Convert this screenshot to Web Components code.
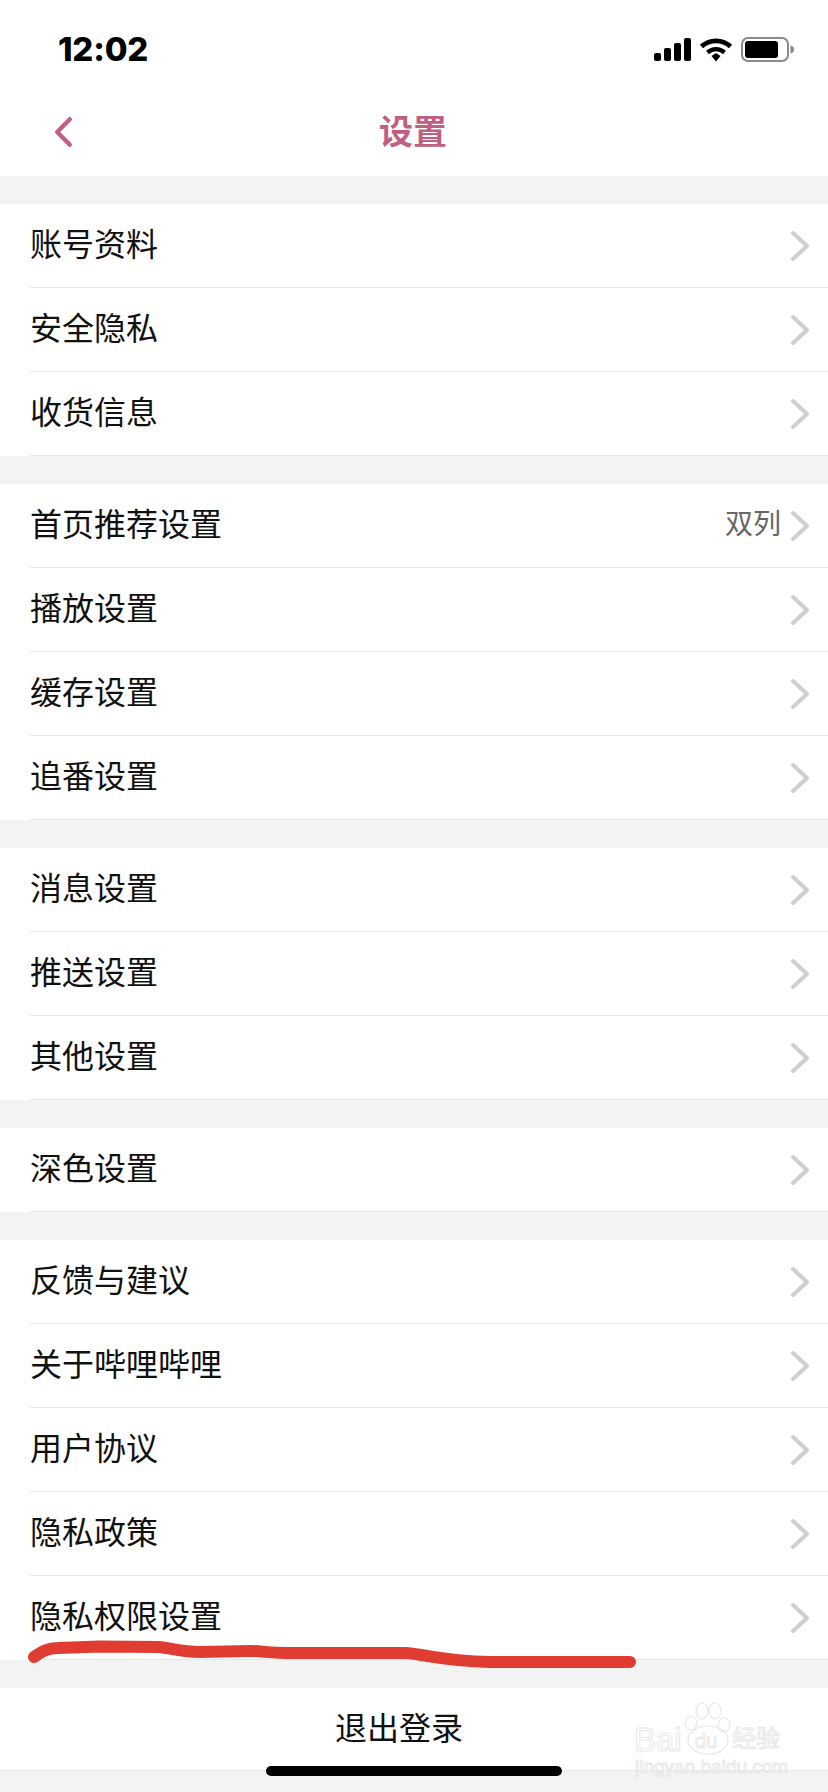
<!DOCTYPE html>
<html lang="zh">
<head>
<meta charset="utf-8">
<title>设置</title>
<style>
html,body{margin:0;padding:0;background:#f3f3f3}
body{width:828px;height:1792px;overflow:hidden;position:relative;font-family:"Noto Sans CJK SC","Liberation Sans",sans-serif}
</style>
</head>
<body>
<template id="status-tpl">
    <style>
        :host{display:flex;justify-content:space-between;align-items:center;height:88px;padding:11px 34px 0 58px;background:#fff;box-sizing:border-box}
        .time{font:800 33px/1 Inter,"Liberation Sans",sans-serif;color:#000;letter-spacing:-.2px}
        .icons{display:flex;align-items:center;gap:9px}
        svg{display:block}
    </style>
    <span class="time">12:02</span>
    <div class="icons">
        <svg width="37" height="23" viewBox="0 0 37 23" fill="#000">
            <rect x="0" y="15" width="7" height="8" rx="2"/>
            <rect x="10" y="10" width="7" height="13" rx="2"/>
            <rect x="20" y="5" width="7" height="18" rx="2"/>
            <rect x="30" y="0" width="7" height="23" rx="2"/>
        </svg>
        <svg width="32" height="24" viewBox="0 0 32 24" fill="none" stroke="#000">
            <path d="M1.500 8.500C10 1 22 1 30.500 8.500" stroke-width="4.800"/>
            <path d="M7.500 14.500C12.500 10 19.500 10 24.500 14.500" stroke-width="4.400"/>
            <path d="M11.500 18L16 15 20.500 18 16 23.500Z" fill="#000" stroke="none"/>
        </svg>
        <svg width="53" height="25" viewBox="0 0 53 25">
            <rect x="1" y="1" width="46" height="23" rx="6" fill="none" stroke="#8a8a8a" stroke-width="2"/>
            <rect x="4" y="4" width="33" height="17" rx="3" fill="#000"/>
            <path d="M49.500 8.500C52 9 53 10.500 53 12.500S52 16 49.500 16.500Z" fill="#8a8a8a"/>
        </svg>
    </div>
</template>

<template id="nav-tpl">
    <style>
        :host{display:flex;align-items:center;justify-content:center;position:relative;height:88px;background:#fff}
        .title{font-size:34px;font-weight:700;color:#c15f82;line-height:1;margin:0 2px 4px 0}
        svg{position:absolute;left:52px;top:27px}
    </style>
    <svg width="22" height="34" viewBox="0 0 22 34" fill="none" stroke="#c15f82" stroke-width="4.400" stroke-linecap="round" stroke-linejoin="round"><path d="M17.800 4.200L5.200 17 17.800 29.800"/></svg>
    <span class="title"><slot></slot></span>
</template>

<template id="group-tpl">
    <style>
        :host{display:block;margin-top:28px;background:#fff}
    </style>
    <slot></slot>
</template>

<template id="row-tpl">
    <style>
        :host{display:block;background:#fff}
        .row{display:flex;align-items:center;height:83px;margin-left:30px;padding-right:18px;border-bottom:1px solid #e6e6e6}
        .label{flex:1;font-size:32px;line-height:1;color:#111;margin-bottom:7px}
        .value{font-size:28px;line-height:1;color:#666;margin:0 9px 7px 0}
        svg{display:block}
    </style>
    <div class="row">
        <span class="label"><slot></slot></span>
        <span class="value"><slot name="value"></slot></span>
        <svg width="20" height="32" viewBox="0 0 20 32" fill="none" stroke="#cfcfcf" stroke-width="4" stroke-linecap="round" stroke-linejoin="round"><path d="M3 3L17 16 3 29"/></svg>
    </div>
</template>

<template id="logout-tpl">
    <style>
        :host{display:flex;align-items:center;justify-content:center;height:83px;margin-top:28px;padding:0 30px 7px 0;box-sizing:border-box;background:#fff;border-bottom:1px solid #e6e6e6;font-size:32px;line-height:1;color:#111}
    </style>
    <slot></slot>
</template>

<template id="overlay-tpl">
    <style>
        :host{position:absolute;inset:0;display:block;pointer-events:none}
        .stroke{position:absolute;left:0;top:0}
        .home{position:absolute;left:266px;top:1766px;width:296px;height:10px;border-radius:5px;background:#000}
        .mark{position:absolute;left:620px;top:1690px;width:208px;height:102px;font-family:"Liberation Sans",sans-serif;color:transparent;-webkit-text-stroke:1px #e8e8e8}
        .mark b{position:absolute;left:14px;top:33px;font-size:33px;line-height:1;font-weight:400}
        .mark u{position:absolute;left:75px;top:41px;font-size:20px;line-height:1;text-decoration:none}
        .mark i{position:absolute;left:112px;top:35px;font:400 24px/1 "Noto Sans CJK SC",sans-serif}
        .mark span{position:absolute;left:15px;top:67px;font-size:19px;line-height:1}
        .mark svg{position:absolute;left:60px;top:10px}
    </style>
    <svg class="stroke" width="828" height="1792" viewBox="0 0 828 1792" fill="none">
        <path d="M34 1657C40 1653 46 1648 58 1648L100 1646.500 158 1647C172 1648 180 1652 200 1652L250 1651C262 1651 268 1653 285 1653L405 1653C425 1654 440 1661 490 1662L630 1662" stroke="#e03c31" stroke-width="12" stroke-linecap="round" stroke-linejoin="round"/>
    </svg>
    <div class="mark">
        <svg width="56" height="56" viewBox="0 0 56 56" fill="none" stroke="#e8e8e8" stroke-width="1.200">
            <ellipse cx="28" cy="40" rx="20" ry="14"/>
            <ellipse cx="11" cy="23" rx="6" ry="7"/><ellipse cx="22" cy="11" rx="6" ry="8"/><ellipse cx="35" cy="11" rx="6" ry="8"/><ellipse cx="44" cy="25" rx="6" ry="7"/>
        </svg>
        <b>Bai</b><u>du</u><i>经验</i><span>jingyan.baidu.com</span>
    </div>
    <div class="home"></div>
</template>

<status-bar></status-bar>
<nav-bar>设置</nav-bar>
<setting-group>
    <setting-row>账号资料</setting-row>
    <setting-row>安全隐私</setting-row>
    <setting-row>收货信息</setting-row>
</setting-group>
<setting-group>
    <setting-row>首页推荐设置<span slot="value">双列</span></setting-row>
    <setting-row>播放设置</setting-row>
    <setting-row>缓存设置</setting-row>
    <setting-row>追番设置</setting-row>
</setting-group>
<setting-group>
    <setting-row>消息设置</setting-row>
    <setting-row>推送设置</setting-row>
    <setting-row>其他设置</setting-row>
</setting-group>
<setting-group>
    <setting-row>深色设置</setting-row>
</setting-group>
<setting-group>
    <setting-row>反馈与建议</setting-row>
    <setting-row>关于哔哩哔哩</setting-row>
    <setting-row>用户协议</setting-row>
    <setting-row>隐私政策</setting-row>
    <setting-row>隐私权限设置</setting-row>
</setting-group>
<logout-row>退出登录</logout-row>
<page-overlay></page-overlay>

<script>
function define(name, tplId) {
    customElements.define(name, class extends HTMLElement {
        connectedCallback() {
            if (this.shadowRoot) return;
            this.attachShadow({ mode: 'open' });
            this.shadowRoot.appendChild(document.getElementById(tplId).content.cloneNode(true));
        }
    });
}
define('status-bar', 'status-tpl');
define('nav-bar', 'nav-tpl');
define('setting-group', 'group-tpl');
define('setting-row', 'row-tpl');
define('logout-row', 'logout-tpl');
define('page-overlay', 'overlay-tpl');
</script>
</body>
</html>
